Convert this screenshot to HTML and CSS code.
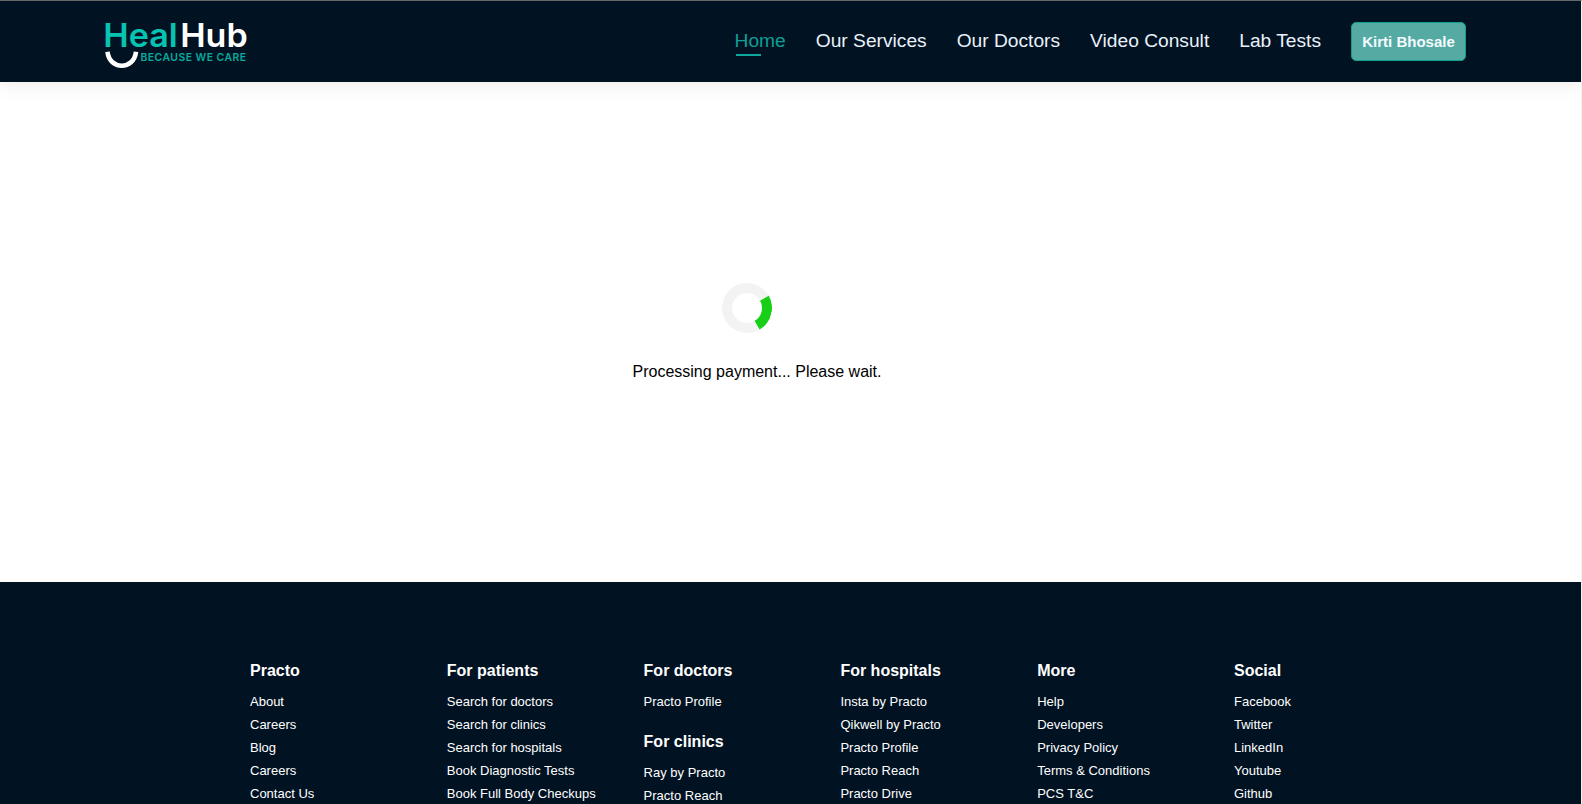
FILE: index.html
```html
<!DOCTYPE html>
<html lang="en">
<head>
<meta charset="utf-8">
<title>HealHub</title>
<link rel="stylesheet" href="styles.css">
</head>
<body>
<div class="page">
  <header class="header">
    <a class="logo" aria-label="HealHub">
      <svg width="150" height="60" viewBox="100 12 150 60">
        <text class="logo-name logo-teal" x="103.2" y="46.8" textLength="74.5" lengthAdjust="spacingAndGlyphs">Heal</text>
        <text class="logo-name logo-white" x="180.2" y="46.8" textLength="67.5" lengthAdjust="spacingAndGlyphs">Hub</text>
        <path class="logo-smile" d="M107.5 51.8 C109.5 70.4 134 70.4 136 51.8"/>
        <text class="logo-tag" x="140.5" y="61.4" textLength="105.5">BECAUSE WE CARE</text>
      </svg>
    </a>
    <nav class="nav">
      <a class="nav-link active">Home</a>
      <a class="nav-link">Our Services</a>
      <a class="nav-link">Our Doctors</a>
      <a class="nav-link">Video Consult</a>
      <a class="nav-link">Lab Tests</a>
      <button class="user-button">Kirti Bhosale</button>
    </nav>
  </header>
  <main class="main">
    <div class="spinner"></div>
    <p class="message">Processing payment... Please wait.</p>
  </main>
  <footer class="footer">
    <div class="column">
      <h4>Practo</h4>
      <a>About</a><a>Careers</a><a>Blog</a><a>Careers</a><a>Contact Us</a>
    </div>
    <div class="column">
      <h4>For patients</h4>
      <a>Search for doctors</a><a>Search for clinics</a><a>Search for hospitals</a><a>Book Diagnostic Tests</a><a>Book Full Body Checkups</a>
    </div>
    <div class="column">
      <h4>For doctors</h4>
      <a>Practo Profile</a>
      <h4 class="second">For clinics</h4>
      <a>Ray by Practo</a><a>Practo Reach</a>
    </div>
    <div class="column">
      <h4>For hospitals</h4>
      <a>Insta by Practo</a><a>Qikwell by Practo</a><a>Practo Profile</a><a>Practo Reach</a><a>Practo Drive</a>
    </div>
    <div class="column">
      <h4>More</h4>
      <a>Help</a><a>Developers</a><a>Privacy Policy</a><a>Terms &amp; Conditions</a><a>PCS T&amp;C</a>
    </div>
    <div class="column">
      <h4>Social</h4>
      <a>Facebook</a><a>Twitter</a><a>LinkedIn</a><a>Youtube</a><a>Github</a>
    </div>
  </footer>
</div>
</body>
</html>
```
FILE: styles.css
```css
* { box-sizing: border-box; }

body {
  margin: 0;
  overflow: hidden;
  background: #fff;
  font-family: "Liberation Sans", Arial, sans-serif;
}

.page {
  display: flex;
  flex-direction: column;
  height: 804px;
  overflow: hidden;
  border-top: 1px solid #666;
  border-right: 1px solid #f1f1f1;
}

.header {
  display: flex;
  flex: none;
  justify-content: space-between;
  height: 81px;
  padding: 11px 115px 0 100px;
  background: #011222;
  box-shadow: 0 0 20px rgba(0, 0, 0, 0.1);
}

.logo svg { display: block; }

.logo-name {
  font-family: Inter, sans-serif;
  font-size: 33px;
  font-weight: 600;
}

.logo-teal { fill: #06c3b2; }
.logo-white { fill: #fff; }

.logo-tag {
  fill: #06ab9d;
  font-family: Inter, sans-serif;
  font-size: 10.4px;
  font-weight: 600;
}

.logo-smile {
  fill: none;
  stroke: #fff;
  stroke-width: 4.6;
}

.nav {
  display: flex;
  align-items: flex-start;
  gap: 30px;
  padding-top: 10px;
}

.nav-link {
  padding: 8px 0 4px;
  color: #e8f1fa;
  font-size: 19.2px;
  line-height: 22px;
  white-space: nowrap;
}

.nav-link.active {
  color: #0e9f94;
  background: linear-gradient(#0fa69b, #0fa69b) 1px 100% / 25px 2px no-repeat;
}

.user-button {
  width: 115px;
  height: 39px;
  padding: 0 0 1px;
  border: 1px solid #0fa091;
  border-radius: 5px;
  background: #55aaa4;
  color: #f4fbfd;
  font-family: "Liberation Sans", Arial, sans-serif;
  font-size: 15px;
  font-weight: 700;
  white-space: nowrap;
}

.main {
  display: flex;
  flex: none;
  flex-direction: column;
  align-items: center;
  width: 1514px;
  height: 500px;
  padding-top: 201px;
}

.spinner {
  width: 50px;
  height: 50px;
  margin-right: 20px;
  border: 10px solid #f3f3f3;
  border-top-color: #17cf17;
  border-radius: 50%;
  transform: rotate(105deg);
}

.message {
  margin: 29px 0 0;
  color: #000;
  font-size: 16px;
  line-height: 20px;
}

.footer {
  display: grid;
  flex: 1;
  grid-template-columns: repeat(6, 196.8px);
  align-content: start;
  padding: 80px 0 0 250px;
  background: #011222;
  color: #fff;
}

.column {
  display: flex;
  flex-direction: column;
}

.column h4 {
  margin: 0 0 14px;
  font-size: 16px;
  line-height: 18px;
}

.column h4.second { margin-top: 16px; }

.column a {
  font-size: 13px;
  line-height: 15px;
  margin-bottom: 8px;
}
```
